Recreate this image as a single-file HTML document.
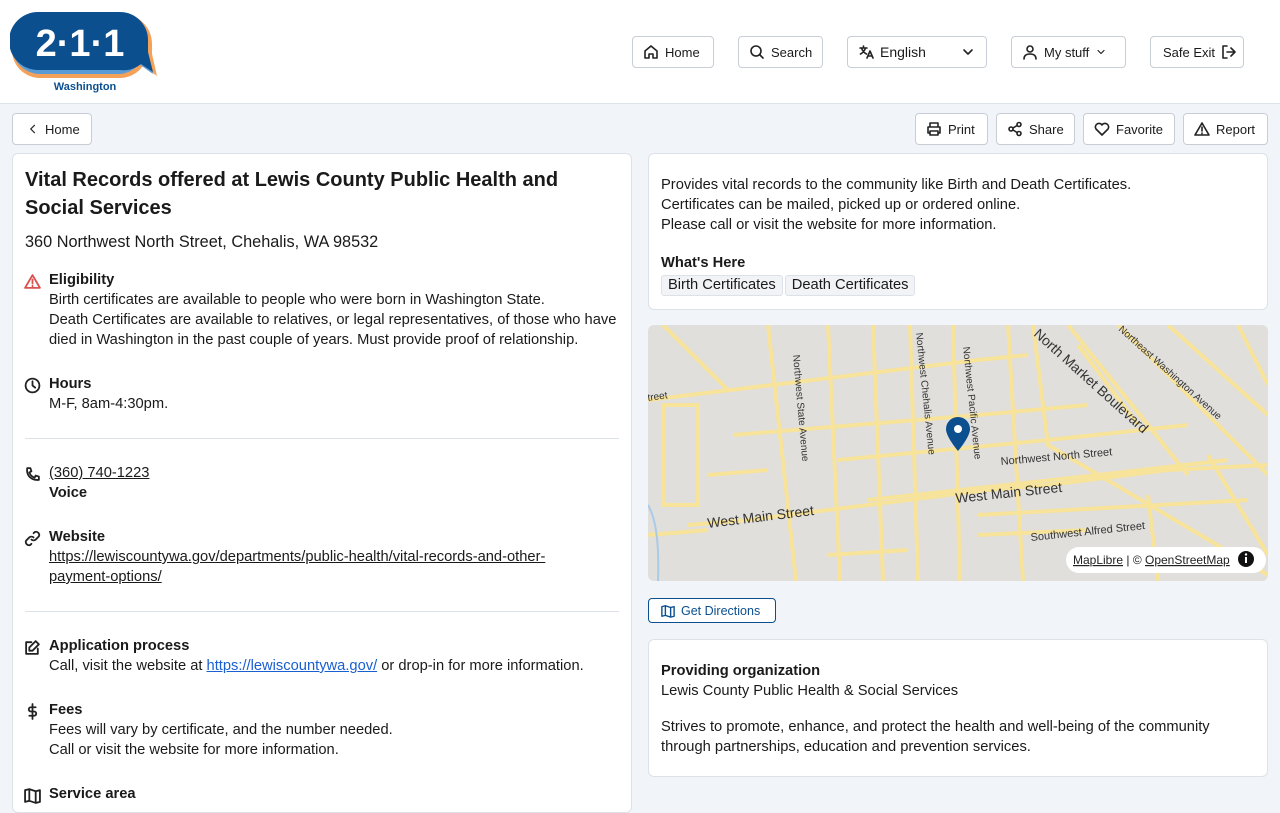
<!DOCTYPE html>
<html><head><meta charset="utf-8">
<style>
*{box-sizing:border-box;margin:0;padding:0}
body{width:1280px;height:800px;overflow:hidden;background:#f1f4f8;font-family:"Liberation Sans",Arial,sans-serif;color:#1a1a1a;font-size:14px}
.hdr{position:absolute;left:0;top:0;width:1280px;height:104px;background:#fff;border-bottom:1px solid #dde2e8}
.btn{position:absolute;height:32px;border:1px solid #c9ced6;border-radius:4px;background:#fff;display:flex;align-items:center;font-size:13px;color:#1a1a1a;gap:6px;padding:0 10px;white-space:nowrap}
.btn svg{width:16px;height:16px;fill:none;stroke:#222;stroke-width:1.6;stroke-linecap:round;stroke-linejoin:round;flex:none}
.card{position:absolute;background:#fff;border:1px solid #dde2e8;border-radius:6px}
.sec{position:absolute;left:24px;width:600px}
.sec svg{position:absolute;left:0;top:3px;width:17px;height:17px;fill:none;stroke:#222;stroke-width:1.7;stroke-linecap:round;stroke-linejoin:round}
.sec .t{margin-left:25px;line-height:20px;font-size:14.7px;width:570px}
.sec b{font-weight:bold}
.hr{position:absolute;left:25px;width:594px;height:1px;background:#dde2e8}
a{color:#1a1a1a}
.tag{display:inline-block;background:#f1f3f6;border:1px solid #dde2e8;border-radius:3px;padding:0 6px;line-height:19px;font-size:14.7px;margin-right:2px}
.p{font-size:14.7px;line-height:20px}
</style></head><body>
<div class="hdr">
 <svg style="position:absolute;left:10px;top:10px" width="150" height="84" viewBox="0 0 150 84">
  <path d="M30 4 H112 a30 30 0 0 1 30 30 v10 l5 22 l-14-10 a30 30 0 0 1-21 12 H30 a28 28 0 0 1 0-56z" fill="#f4a259"/>
  <path d="M30 8 H110 a28 28 0 0 1 28 28 v8 l5 20 l-14-10 a28 28 0 0 1-19 10 H30 a28 28 0 0 1 0-56z" fill="#5b9bd5"/>
  <path d="M28 2 H110 a28 28 0 0 1 28 28 v12 l5 20 l-12-8 a28 28 0 0 1-21 6 H28 a28 28 0 0 1 0-58z" fill="#0b4f8f"/>
  <text x="70" y="46" font-family="Liberation Sans" font-weight="bold" font-size="38" fill="#fff" text-anchor="middle">2·1·1</text>
  <text x="75" y="80" font-family="Liberation Sans" font-weight="bold" font-size="11" fill="#0b4f8f" text-anchor="middle">Washington</text>
 </svg>
 <div class="btn" style="left:632px;top:36px;width:82px"><svg viewBox="0 0 16 16"><path d="M2 7l6-5 6 5v7H10v-4H6v4H2z"/></svg>Home</div>
 <div class="btn" style="left:738px;top:36px;width:85px"><svg viewBox="0 0 16 16"><circle cx="7" cy="7" r="5"/><path d="M11 11l3 3"/></svg>Search</div>
 <div class="btn" style="left:847px;top:36px;width:140px;font-size:14px"><svg viewBox="0 0 16 16"><path d="M2 4h7M5.5 2v2M3.5 4c1 3 3 5 5 6M7.5 4c-1 3-3 5-5 6M9 14l3-7 3 7M10 12h4"/></svg>English<svg style="margin-left:auto" viewBox="0 0 16 16"><path d="M4 6l4 4 4-4"/></svg></div>
 <div class="btn" style="left:1011px;top:36px;width:115px"><svg viewBox="0 0 16 16"><circle cx="8" cy="5" r="3"/><path d="M2 15c0-4 3-5 6-5s6 1 6 5"/></svg>My stuff<svg viewBox="0 0 16 16" style="width:12px"><path d="M4 6l4 4 4-4"/></svg></div>
 <div class="btn" style="left:1150px;top:36px;width:94px;padding-left:12px">Safe Exit<svg viewBox="0 0 16 16"><path d="M6 2H2v12h4M10 4l4 4-4 4M14 8H6"/></svg></div>
</div>
<div class="btn" style="left:12px;top:113px;width:80px;padding-left:14px"><svg viewBox="0 0 16 16" style="width:12px"><path d="M10 3L5 8l5 5"/></svg>Home</div>
<div class="btn" style="left:915px;top:113px;width:73px"><svg viewBox="0 0 16 16"><path d="M4 6V2h8v4M4 12H2V6h12v6h-2M4 10h8v4H4z"/></svg>Print</div>
<div class="btn" style="left:996px;top:113px;width:79px"><svg viewBox="0 0 16 16"><circle cx="12" cy="3.5" r="2"/><circle cx="4" cy="8" r="2"/><circle cx="12" cy="12.5" r="2"/><path d="M6 7l4-2.5M6 9l4 2.5"/></svg>Share</div>
<div class="btn" style="left:1083px;top:113px;width:92px"><svg viewBox="0 0 16 16"><path d="M8 14L2 8a3.3 3.3 0 0 1 6-4 3.3 3.3 0 0 1 6 4z"/></svg>Favorite</div>
<div class="btn" style="left:1183px;top:113px;width:85px"><svg viewBox="0 0 16 16"><path d="M8 2L1 14h14zM8 6v4M8 12v.5"/></svg>Report</div>

<div class="card" style="left:12px;top:153px;width:620px;height:660px">
 <div style="position:absolute;left:12px;top:12px;width:580px;font-size:20px;line-height:28px;font-weight:bold;color:#1a1a1a">Vital Records offered at Lewis County Public Health and Social Services</div>
 <div style="position:absolute;left:12px;top:79px;font-size:16.3px">360 Northwest North Street, Chehalis, WA 98532</div>
</div>
<div class="sec" style="top:270px"><svg viewBox="0 0 16 16" style="stroke:#d9534f"><path d="M8 2L1 14h14zM8 6v4M8 12v.5"/></svg><div class="t"><b>Eligibility</b><br>Birth certificates are available to people who were born in Washington State.<br>Death Certificates are available to relatives, or legal representatives, of those who have died in Washington in the past couple of years. Must provide proof of relationship.</div></div>
<div class="sec" style="top:374px"><svg viewBox="0 0 16 16"><circle cx="8" cy="8" r="6.5"/><path d="M8 4v4l2.5 2"/></svg><div class="t"><b>Hours</b><br>M-F, 8am-4:30pm.</div></div>
<div class="hr" style="top:438px"></div>
<div class="sec" style="top:463px"><svg viewBox="0 0 16 16"><path d="M3 2h3l1 3-2 1a8 8 0 0 0 5 5l1-2 3 1v3c-7 1-12-4-11-11z"/></svg><div class="t"><a href="#">(360) 740-1223</a><br><b>Voice</b></div></div>
<div class="sec" style="top:527px"><svg viewBox="0 0 16 16"><path d="M7 9a3 3 0 0 0 4 0l3-3a3 3 0 0 0-4-4l-1 1M9 7a3 3 0 0 0-4 0l-3 3a3 3 0 0 0 4 4l1-1"/></svg><div class="t"><b>Website</b><br><a href="#">https://lewiscountywa.gov/departments/public-health/vital-records-and-other-<br>payment-options/</a></div></div>
<div class="hr" style="top:611px"></div>
<div class="sec" style="top:636px"><svg viewBox="0 0 16 16"><path d="M13 9v5H2V3h5M11 2l3 3-6 6H5V8z"/></svg><div class="t"><b>Application process</b><br>Call, visit the website at <a href="#" style="color:#1a5fd0">https://lewiscountywa.gov/</a> or drop-in for more information.</div></div>
<div class="sec" style="top:700px"><svg viewBox="0 0 16 16"><path d="M8 1v14M11 4H6.5a2 2 0 0 0 0 4h3a2 2 0 0 1 0 4H5"/></svg><div class="t"><b>Fees</b><br>Fees will vary by certificate, and the number needed.<br>Call or visit the website for more information.</div></div>
<div class="sec" style="top:784px"><svg viewBox="0 0 16 16"><path d="M1 3l4-1 6 2 4-1v11l-4 1-6-2-4 1zM5 2v11M11 4v11"/></svg><div class="t"><b>Service area</b></div></div>

<div class="card" style="left:648px;top:153px;width:620px;height:157px">
 <div class="p" style="position:absolute;left:12px;top:21px">Provides vital records to the community like Birth and Death Certificates.<br>Certificates can be mailed, picked up or ordered online.<br>Please call or visit the website for more information.</div>
 <div class="p" style="position:absolute;left:12px;top:99px;font-weight:bold">What's Here</div>
 <div style="position:absolute;left:12px;top:121px"><span class="tag">Birth Certificates</span><span class="tag">Death Certificates</span></div>
</div>

<svg style="position:absolute;left:648px;top:325px;border-radius:6px" width="620" height="256" viewBox="0 0 620 256">
 <rect width="620" height="256" fill="#e0dfdc"/>
 <g stroke="#f7e39a" stroke-width="4" fill="none">
  <path d="M0 75 L330 35 L380 30"/><path d="M40 200 L100 195 L340 165 L400 160 L520 145 L620 140"/>
  <path d="M0 210 L60 205"/><path d="M85 110 L330 90 L440 80"/><path d="M190 135 L400 115 L540 100"/>
  <path d="M220 175 L450 150 L580 135"/><path d="M120 0 L148 256"/><path d="M180 0 L192 256"/>
  <path d="M225 0 L235 256"/><path d="M262 0 L270 256"/><path d="M305 0 L312 256"/>
  <path d="M360 0 L375 256"/><path d="M385 0 L400 120 L620 250"/><path d="M420 0 L540 150"/>
  <path d="M470 0 L620 150"/><path d="M520 0 L620 90"/><path d="M15 0 L80 65"/>
  <path d="M15 80 L15 180 L50 180 L50 80z"/><path d="M60 150 L120 145"/><path d="M180 230 L260 225"/>
  <path d="M330 210 L440 205"/><path d="M330 190 L600 175"/><path d="M590 0 L610 40 L620 60"/>
  <path d="M430 20 L490 100"/><path d="M560 130 L620 230"/><path d="M500 170 L510 256"/>
 </g>
 <path d="M0 180 Q12 200 10 256" stroke="#a9cbe8" stroke-width="2" fill="none"/>
 <g font-family="Liberation Sans" fill="#333" font-size="12">
  <text transform="translate(60 203) rotate(-7)" font-size="14">West Main Street</text>
  <text transform="translate(308 178) rotate(-6)" font-size="14">West Main Street</text>
  <text transform="translate(353 140) rotate(-5)" font-size="11">Northwest North Street</text>
  <text transform="translate(383 216) rotate(-6)" font-size="11">Southwest Alfred Street</text>
  <text transform="translate(385 10) rotate(42)" font-size="14">North Market Boulevard</text>
  <text transform="translate(470 5) rotate(42)" font-size="10">Northeast Washington Avenue</text>
  <text transform="translate(145 30) rotate(85)" font-size="10">Northwest State Avenue</text>
  <text transform="translate(268 8) rotate(84)" font-size="10">Northwest Chehalis Avenue</text>
  <text transform="translate(315 22) rotate(84)" font-size="10">Northwest Pacific Avenue</text>
  <text transform="translate(0 76) rotate(-8)" font-size="10">treet</text>
 </g>
 <path d="M310 92 a12 12 0 0 1 12 12 c0 8-12 22-12 22 s-12-14-12-22 a12 12 0 0 1 12-12z" fill="#0b4f8f"/>
 <circle cx="310" cy="104" r="4" fill="#fff"/>
 <rect x="418" y="222" width="200" height="26" rx="13" fill="#fff"/>
 <text x="425" y="239" font-family="Liberation Sans" font-size="12" fill="#222"><tspan text-decoration="underline">MapLibre</tspan> | © <tspan text-decoration="underline">OpenStreetMap</tspan></text>
 <circle cx="598" cy="234" r="8" fill="#111"/><rect x="597" y="232" width="2" height="6" fill="#fff"/><circle cx="598" cy="229.5" r="1.2" fill="#fff"/>
</svg>

<div class="btn" style="left:648px;top:598px;width:128px;height:25px;border-color:#0b4f8f;color:#0b4f8f;font-size:12.5px;padding-left:12px"><svg viewBox="0 0 16 16" style="stroke:#0b4f8f;width:14px"><path d="M1 3l4-1 6 2 4-1v11l-4 1-6-2-4 1zM5 2v11M11 4v11"/></svg>Get Directions</div>

<div class="card" style="left:648px;top:639px;width:620px;height:138px">
 <div class="p" style="position:absolute;left:12px;top:21px"><b>Providing organization</b><br>Lewis County Public Health &amp; Social Services</div>
 <div class="p" style="position:absolute;left:12px;top:77px;width:570px">Strives to promote, enhance, and protect the health and well-being of the community through partnerships, education and prevention services.</div>
</div>
</body></html>
